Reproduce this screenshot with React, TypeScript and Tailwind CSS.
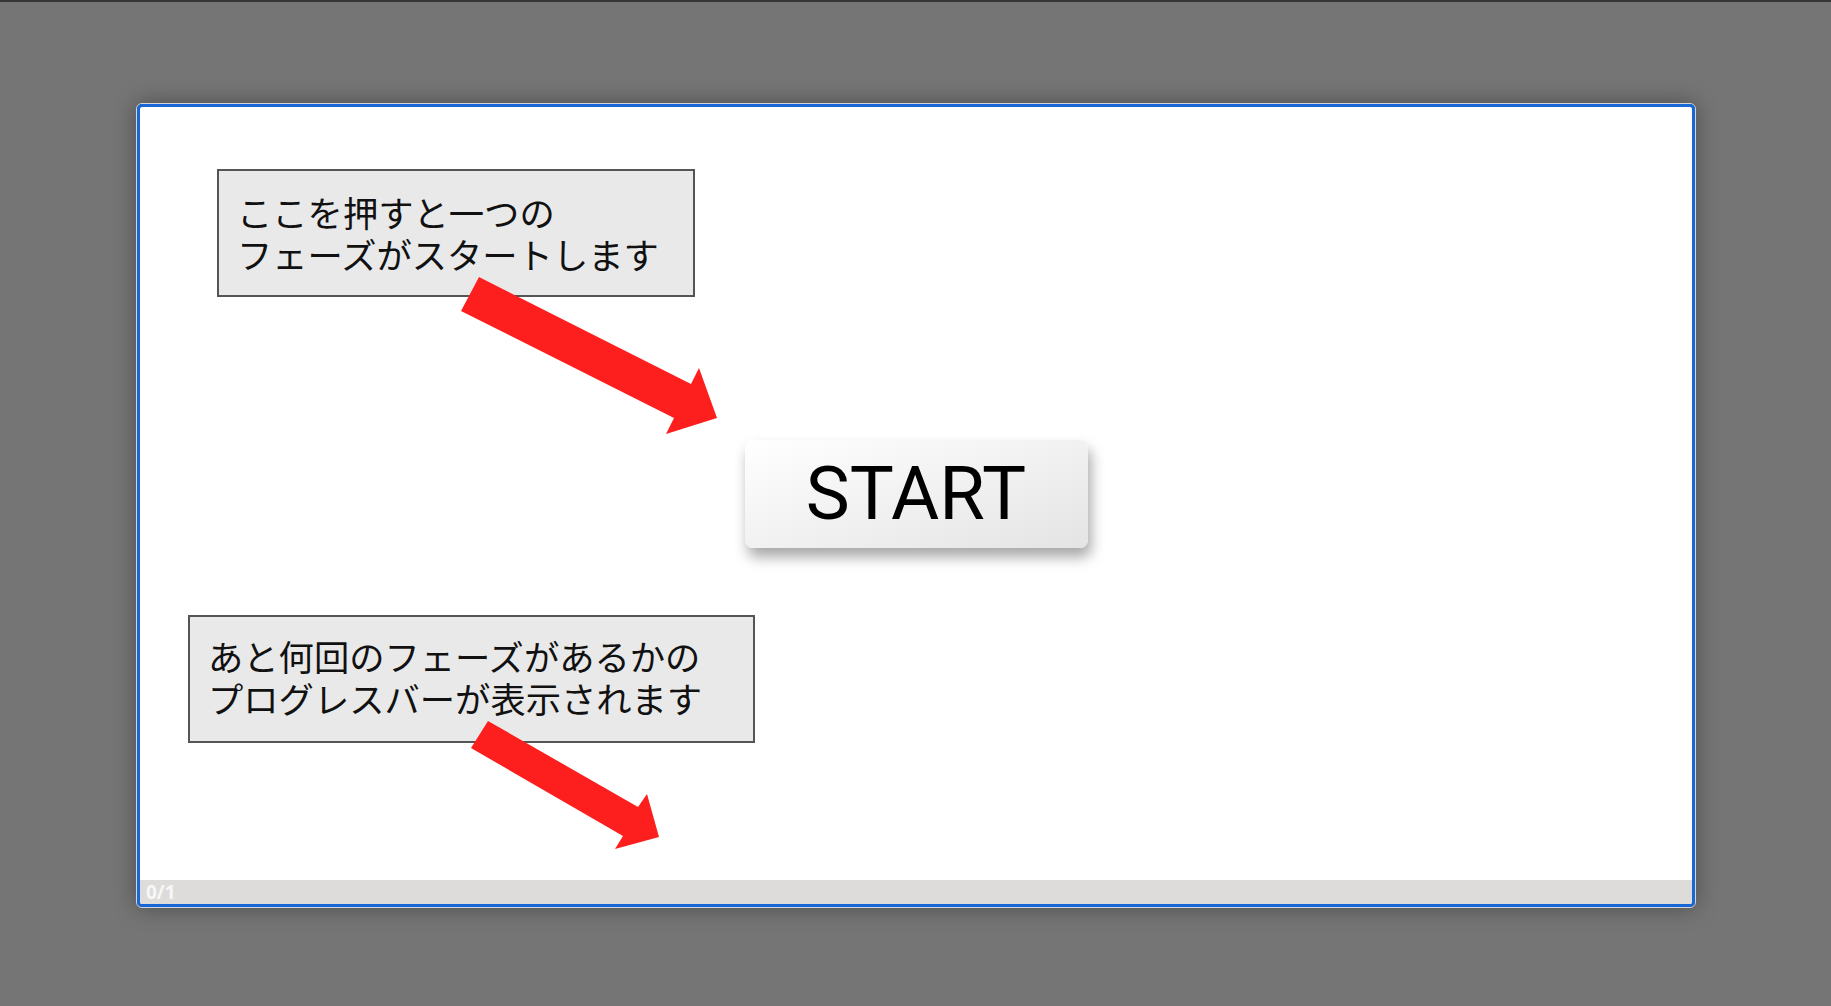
import React from "react";

const jp = { fontFamily: '"Noto Sans CJK JP", "Noto Sans", sans-serif' };

export default function App() {
  return (
    <div className="relative w-[1831px] h-[1006px] overflow-hidden bg-[#757575]">
      <div className="h-[2px] bg-[#363636]" />
      <div className="ml-[136px] mt-[101px] w-[1560px] h-[805px] rounded-[6px] border border-[#d3d5d8] shadow-[0_0_22px_rgba(0,0,0,0.35)]">
        <div className="flex h-full w-full flex-col overflow-hidden rounded-[5px] border-[3px] border-[#1767d6] bg-white">
          <div className="flex flex-1 items-center justify-center">
            <button
              className="flex h-[108px] w-[343px] items-center justify-center rounded-[8px] bg-gradient-to-br from-white to-[#e4e4e4] text-[74px] leading-none text-black shadow-[3px_9px_14px_rgba(0,0,0,0.35)]"
              style={{ fontFamily: 'Roboto, "Liberation Sans", sans-serif' }}
            >
              START
            </button>
          </div>
          <div
            className="flex h-[24px] items-center bg-[#dddcdb] pl-[6px] text-[19px] font-bold text-[#f7f7f7]"
            style={{ fontFamily: '"Noto Sans", "Open Sans", sans-serif' }}
          >
            0/1
          </div>
        </div>
      </div>

      <div
        className="absolute left-[217px] top-[169px] h-[128px] w-[478px] whitespace-nowrap border-2 border-[#555555] bg-[#e9e9e9] pl-[18px] pt-[20px] text-[35.3px] leading-[42px] text-[#111111]"
        style={jp}
      >
        <div>ここを押すと一つの</div>
        <div>フェーズがスタートします</div>
      </div>

      <div
        className="absolute left-[188px] top-[615px] h-[128px] w-[567px] whitespace-nowrap border-2 border-[#555555] bg-[#e9e9e9] pl-[18px] pt-[18px] text-[35.3px] leading-[42px] text-[#111111]"
        style={jp}
      >
        <div>あと何回のフェーズがあるかの</div>
        <div>プログレスバーが表示されます</div>
      </div>

      <svg
        className="pointer-events-none absolute left-0 top-0"
        width="1831"
        height="1006"
        viewBox="0 0 1831 1006"
      >
        <polygon
          points="479,277 691,384 699,368 717,418 666,434 674,418 461,311"
          fill="#fd1e1e"
        />
        <polygon
          points="488,721 638,807 647,794 659,837 615,849 623,836 471,748"
          fill="#fd1e1e"
        />
      </svg>
    </div>
  );
}
